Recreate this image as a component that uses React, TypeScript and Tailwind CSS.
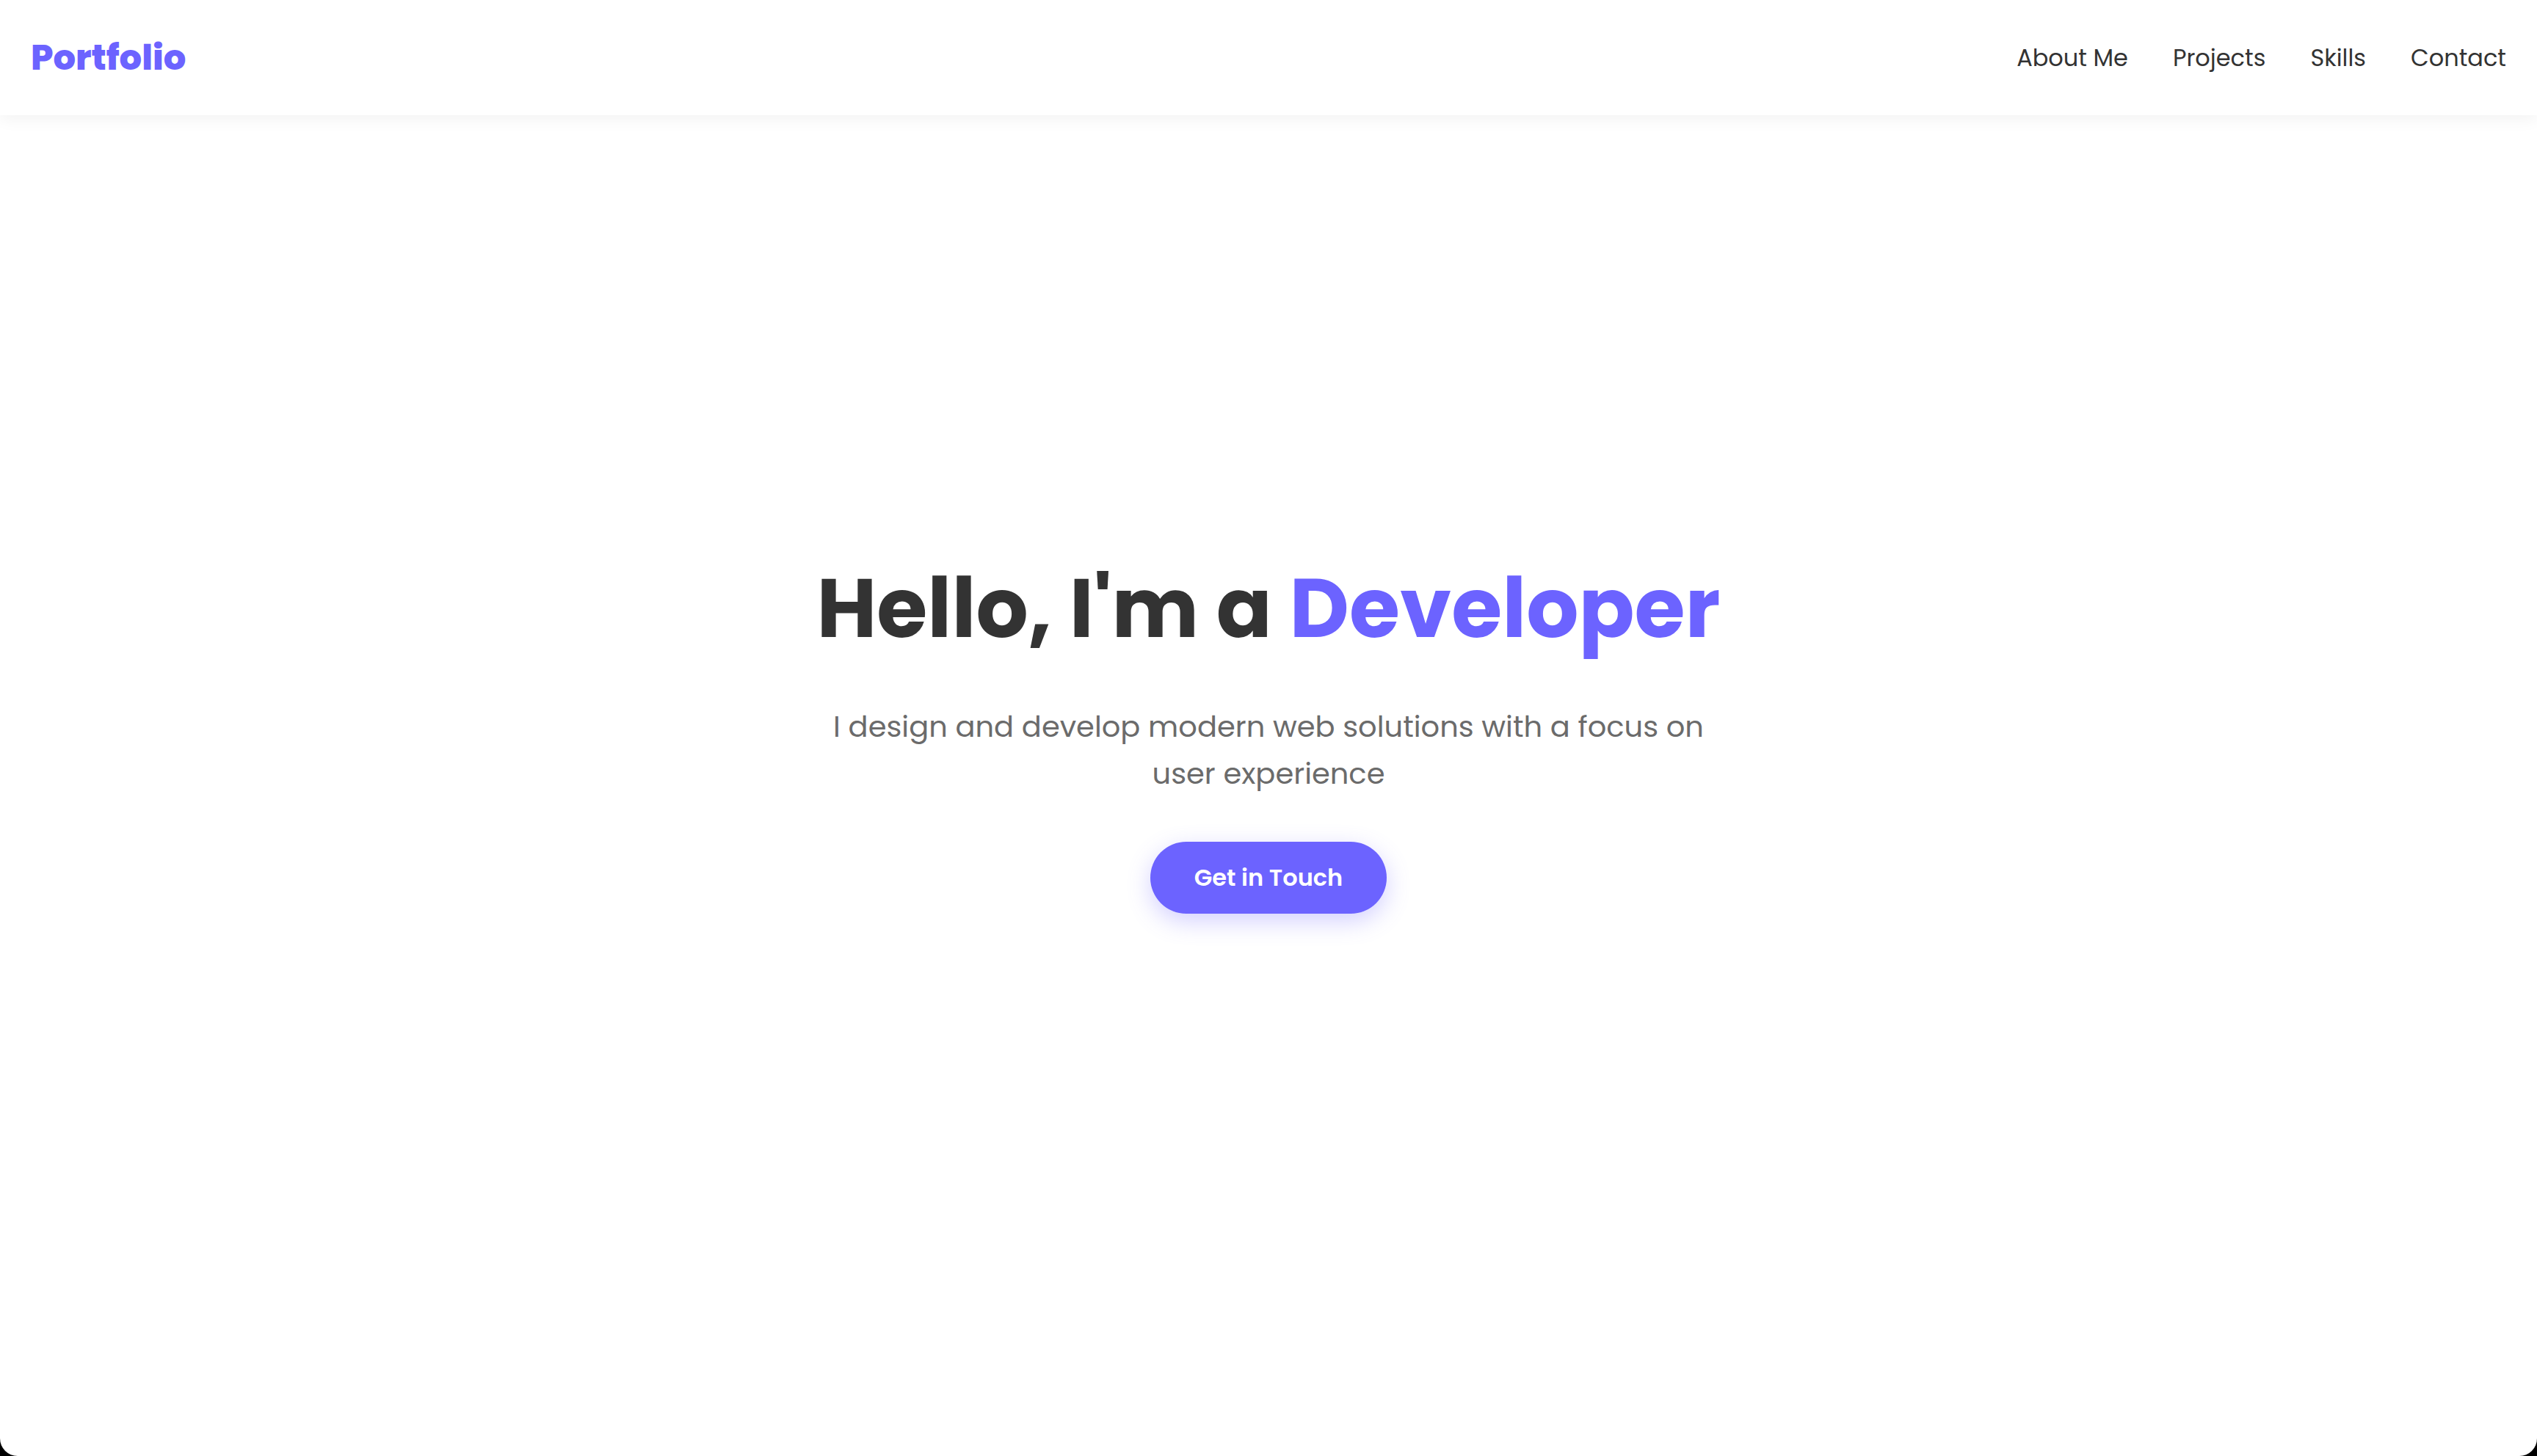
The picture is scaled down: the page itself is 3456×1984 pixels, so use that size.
import React from "react";

/** Navigation links shown in the header */
const NAV_LINKS = ["About Me", "Projects", "Skills", "Contact"] as const;

const FONT = { fontFamily: "Poppins, Inter, 'Noto Sans', sans-serif" };

function Header() {
  return (
    <header className="relative z-10 flex h-[157px] shrink-0 items-center justify-between bg-white px-[42px] shadow-[0_4px_22px_rgba(0,0,0,0.06)]">
      <a href="#" className="text-[48px] font-extrabold leading-none text-[#6c63ff]">
        Portfolio
      </a>
      <nav className="flex items-center gap-[61px]">
        {NAV_LINKS.map((link) => (
          <a key={link} href="#" className="text-[32px] leading-none text-[#333333]">
            {link}
          </a>
        ))}
      </nav>
    </header>
  );
}

function Hero() {
  return (
    <main className="flex flex-1 flex-col items-center pt-[605px] text-center">
      <h1 className="text-[112px] font-bold leading-[1.2] text-[#333333]">
        Hello, I'm a <span className="text-[#6c63ff]">Developer</span>
      </h1>
      <p className="mt-[62px] text-[40px] leading-[64px] text-[#6b6b6b]">
        I design and develop modern web solutions with a focus on
        <br />
        user experience
      </p>
      <button className="mt-[61px] flex h-[98px] w-[322px] items-center justify-center rounded-full bg-[#6c63ff] text-[32px] font-semibold text-white shadow-[0_10px_32px_rgba(108,99,255,0.3)]">
        Get in Touch
      </button>
    </main>
  );
}

export default function App() {
  return (
    <div className="h-screen bg-black" style={FONT}>
      <div className="flex h-full flex-col overflow-hidden rounded-b-[24px] bg-white">
        <Header />
        <Hero />
      </div>
    </div>
  );
}
